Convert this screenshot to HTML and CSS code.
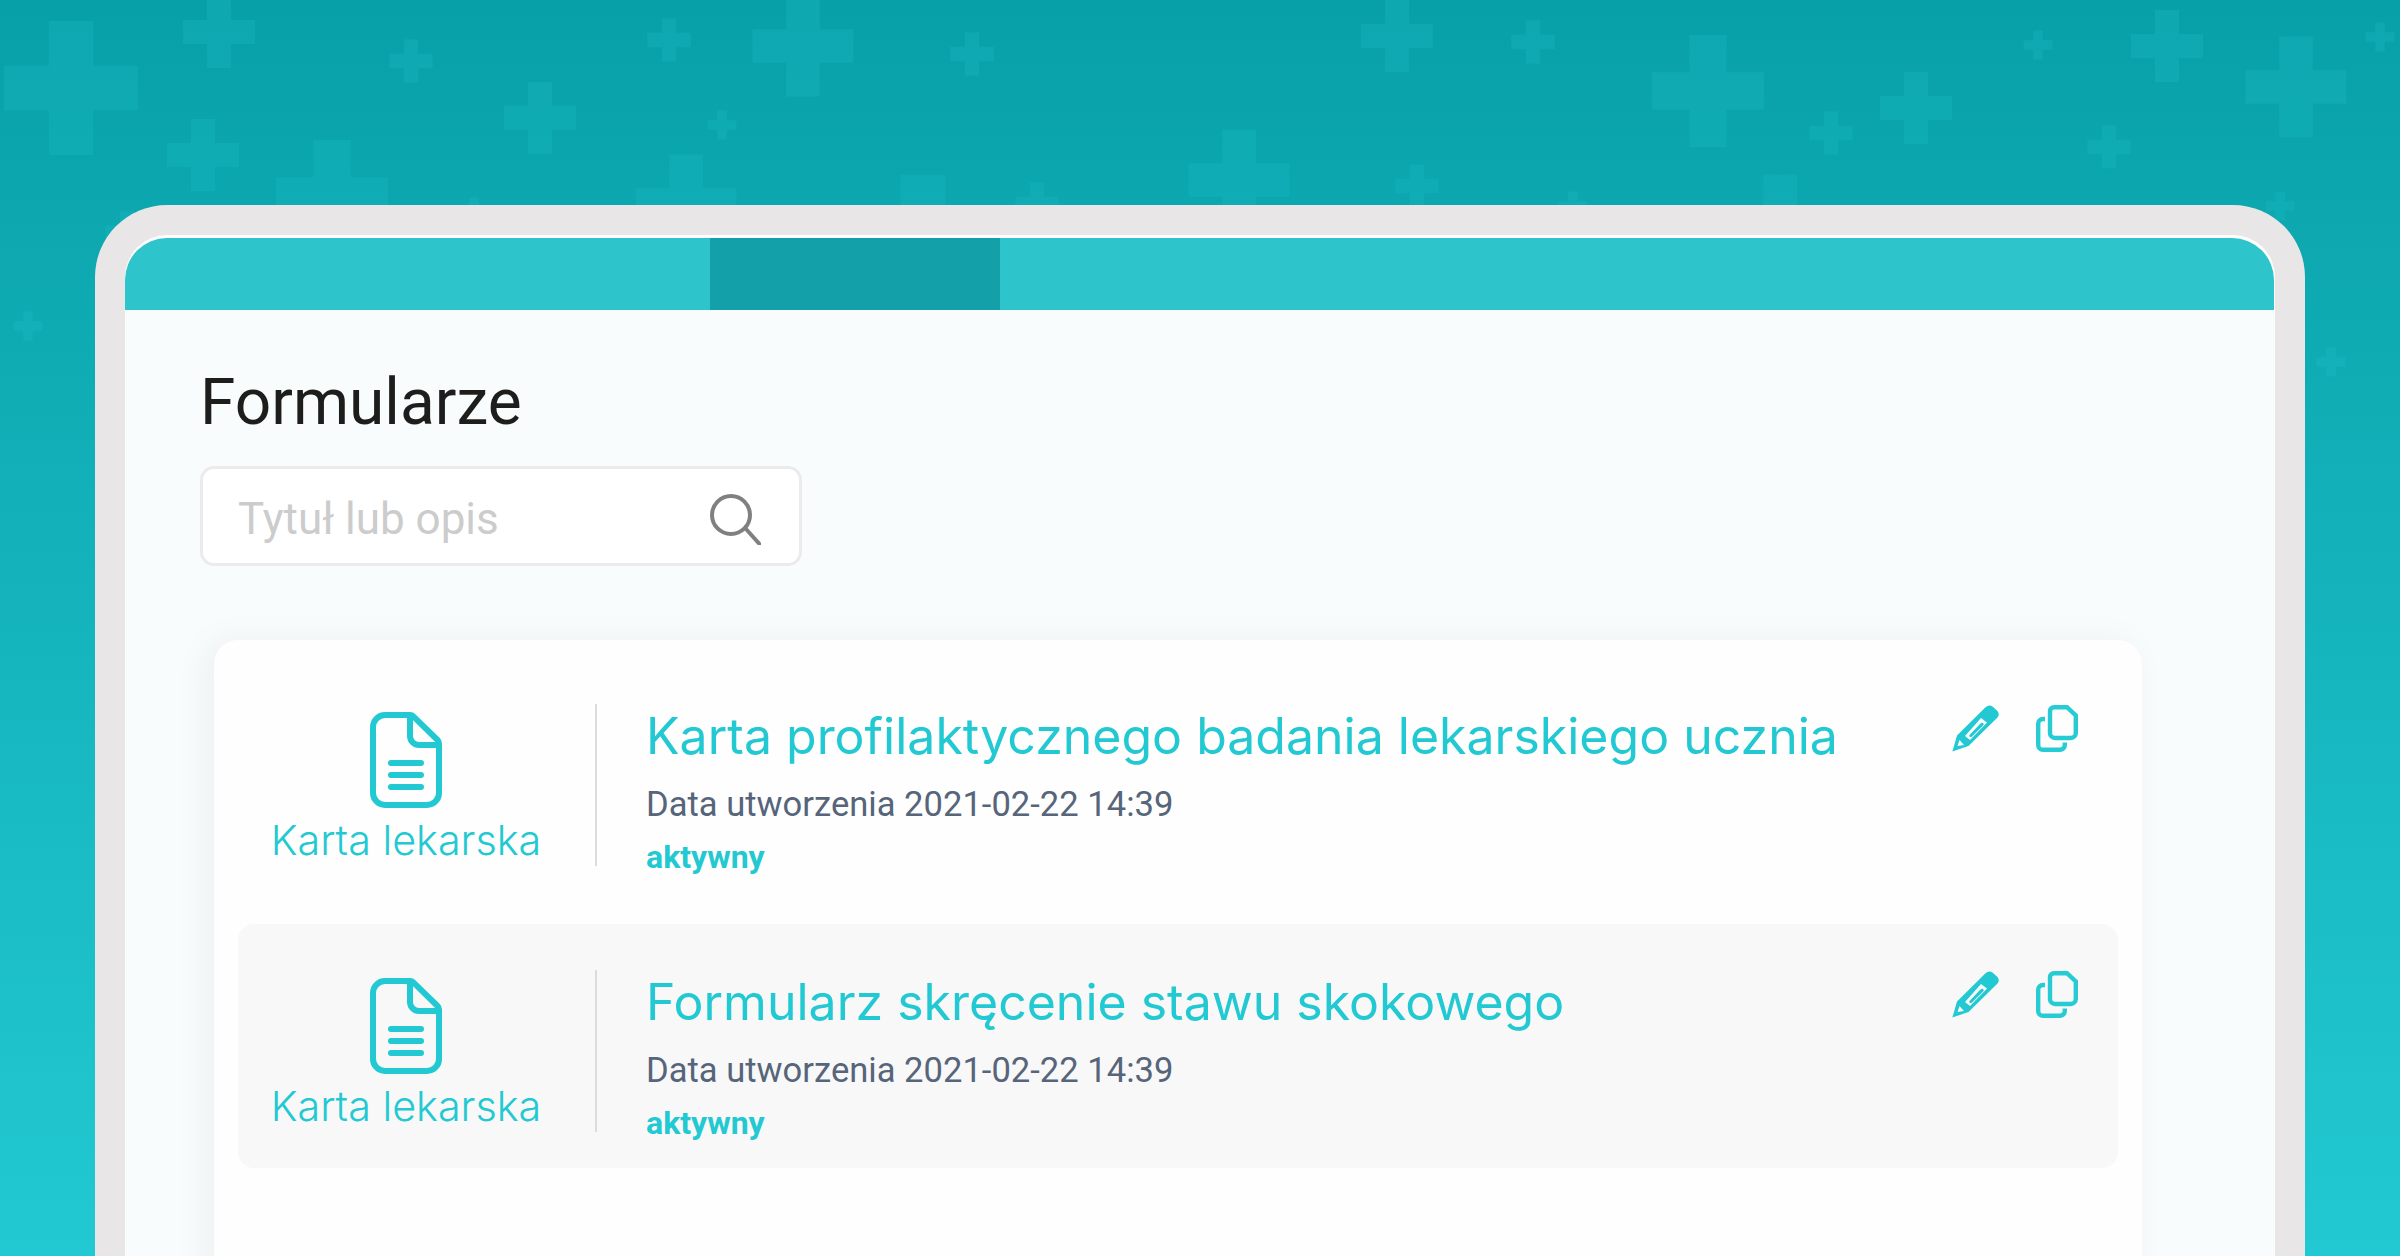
FILE: index.html
```html
<!DOCTYPE html>
<html lang="pl">
<head>
    <meta charset="UTF-8">
    <meta name="viewport" content="width=device-width, initial-scale=1.0">
    <title>Formularze</title>
    <link rel="stylesheet" href="styles.css">
</head>
<body>

    <!-- Background crosses -->
    <svg class="crosses" width="2400" height="1256" viewBox="0 0 2400 1256" aria-hidden="true">
        <defs>
            <path id="plus" d="M-1-3H1V-1H3V1H1V3H-1V1H-3V-1H-1Z"/>
        </defs>
        <use href="#plus" transform="translate(71 88) scale(22.3)"/>
        <use href="#plus" transform="translate(219 32) scale(12)"/>
        <use href="#plus" transform="translate(411 61) scale(7.2)"/>
        <use href="#plus" transform="translate(669 40) scale(7.2)"/>
        <use href="#plus" transform="translate(803 46) scale(16.8)"/>
        <use href="#plus" transform="translate(972 54) scale(7.2)"/>
        <use href="#plus" transform="translate(540 118) scale(12)"/>
        <use href="#plus" transform="translate(722 125) scale(4.8)"/>
        <use href="#plus" transform="translate(203 155) scale(12)"/>
        <use href="#plus" transform="translate(332 196) scale(18.7)"/>
        <use href="#plus" transform="translate(686 205) scale(16.8)"/>
        <use href="#plus" transform="translate(923 242) scale(22.3)"/>
        <use href="#plus" transform="translate(1037 204) scale(7.2)"/>
        <use href="#plus" transform="translate(474 212) scale(4.8)"/>
        <use href="#plus" transform="translate(1239 180) scale(16.8)"/>
        <use href="#plus" transform="translate(1397 36) scale(12)"/>
        <use href="#plus" transform="translate(1533 42) scale(7.2)"/>
        <use href="#plus" transform="translate(1708 91) scale(18.7)"/>
        <use href="#plus" transform="translate(1916 108) scale(12)"/>
        <use href="#plus" transform="translate(1831 133) scale(7.2)"/>
        <use href="#plus" transform="translate(2038 45) scale(4.8)"/>
        <use href="#plus" transform="translate(2167 46) scale(12)"/>
        <use href="#plus" transform="translate(2296 87) scale(16.8)"/>
        <use href="#plus" transform="translate(2380 37) scale(4.8)"/>
        <use href="#plus" transform="translate(2109 147) scale(7.2)"/>
        <use href="#plus" transform="translate(1417 186) scale(7.2)"/>
        <use href="#plus" transform="translate(1780 225) scale(16.8)"/>
        <use href="#plus" transform="translate(1573 206) scale(4.8)"/>
        <use href="#plus" transform="translate(2280 206) scale(4.8)"/>
        <use href="#plus" transform="translate(127 233) scale(7.2)"/>
        <use href="#plus" transform="translate(28 326) scale(4.8)"/>
        <use href="#plus" transform="translate(2331 362) scale(4.8)"/>
    </svg>

    <div class="frame">
        <div class="tabs">
            <div class="tab tab-first"></div>
            <div class="tab tab-active"></div>
            <div class="tab tab-rest"></div>
        </div>

        <main class="content">
            <h1 class="page-title">Formularze</h1>

            <div class="search-box">
                <span class="search-placeholder">Tytuł lub opis</span>
                <svg class="search-icon" width="51" height="51" viewBox="0 0 51 51">
                    <circle cx="21" cy="21" r="19" fill="none" stroke="#808080" stroke-width="4"/>
                    <path d="M36 35L49.5 50" fill="none" stroke="#808080" stroke-width="4" stroke-linecap="round"/>
                </svg>
            </div>

            <div class="form-list">
                <article class="form-row">
                    <div class="form-type">
                        <svg class="file-icon" width="72" height="96" viewBox="0 0 72 96">
                            <path d="M15 3H40a5 5 0 0 1 3.5 1.5L67.5 28a5 5 0 0 1 1.5 3.5V81a12 12 0 0 1-12 12H15a12 12 0 0 1-12-12V15A12 12 0 0 1 15 3Z"/>
                            <path d="M40 3V24a9 9 0 0 0 9 9H69"/>
                            <path d="M21 51H51M21 63H51M21 75H51" stroke-linecap="round"/>
                        </svg>
                        <span class="type-label">Karta lekarska</span>
                    </div>
                    <div class="form-info">
                        <h2 class="form-title">Karta profilaktycznego badania lekarskiego ucznia</h2>
                        <p class="form-date">Data utworzenia 2021-02-22 14:39</p>
                        <p class="form-status">aktywny</p>
                    </div>
                    <div class="form-actions">
                        <svg class="pencil-icon" width="47" height="47" viewBox="0 0 47 47">
                            <path fill-rule="evenodd" d="M.4 46.6 5 30.5 33.5 2.3Q37 -.7 40.5 1.5L45.5 6Q48 9.5 45.5 12.5L16.5 41ZM13 31 29 13 35 17.5 18 35ZM17.5 30 28.5 18.5Q30.5 17 31.5 18.5 32 19.7 31 20.5L20 31.5Q18.5 32.5 17.5 31.5 17 30.7 17.5 30ZM5.5 41 7.5 35 12 40Z"/>
                        </svg>
                        <svg class="copy-icon" width="42" height="47" viewBox="0 0 42 47">
                            <path d="M18 2.2H31L39.8 10.5V28a5 5 0 0 1-5 5H19a5 5 0 0 1-5-5V6.2a4 4 0 0 1 4-4Z"/>
                            <path d="M9 14H7a4.8 4.8 0 0 0-4.8 4.8V40A4.8 4.8 0 0 0 7 44.8H24A4.8 4.8 0 0 0 28.8 40V37.5"/>
                        </svg>
                    </div>
                </article>

                <article class="form-row">
                    <div class="form-type">
                        <svg class="file-icon" width="72" height="96" viewBox="0 0 72 96">
                            <path d="M15 3H40a5 5 0 0 1 3.5 1.5L67.5 28a5 5 0 0 1 1.5 3.5V81a12 12 0 0 1-12 12H15a12 12 0 0 1-12-12V15A12 12 0 0 1 15 3Z"/>
                            <path d="M40 3V24a9 9 0 0 0 9 9H69"/>
                            <path d="M21 51H51M21 63H51M21 75H51" stroke-linecap="round"/>
                        </svg>
                        <span class="type-label">Karta lekarska</span>
                    </div>
                    <div class="form-info">
                        <h2 class="form-title">Formularz skręcenie stawu skokowego</h2>
                        <p class="form-date">Data utworzenia 2021-02-22 14:39</p>
                        <p class="form-status">aktywny</p>
                    </div>
                    <div class="form-actions">
                        <svg class="pencil-icon" width="47" height="47" viewBox="0 0 47 47">
                            <path fill-rule="evenodd" d="M.4 46.6 5 30.5 33.5 2.3Q37 -.7 40.5 1.5L45.5 6Q48 9.5 45.5 12.5L16.5 41ZM13 31 29 13 35 17.5 18 35ZM17.5 30 28.5 18.5Q30.5 17 31.5 18.5 32 19.7 31 20.5L20 31.5Q18.5 32.5 17.5 31.5 17 30.7 17.5 30ZM5.5 41 7.5 35 12 40Z"/>
                        </svg>
                        <svg class="copy-icon" width="42" height="47" viewBox="0 0 42 47">
                            <path d="M18 2.2H31L39.8 10.5V28a5 5 0 0 1-5 5H19a5 5 0 0 1-5-5V6.2a4 4 0 0 1 4-4Z"/>
                            <path d="M9 14H7a4.8 4.8 0 0 0-4.8 4.8V40A4.8 4.8 0 0 0 7 44.8H24A4.8 4.8 0 0 0 28.8 40V37.5"/>
                        </svg>
                    </div>
                </article>
            </div>
        </main>
    </div>

</body>
</html>
```

FILE: styles.css
```css
body {
    margin: 0;
    height: 1256px;
    overflow: hidden;
    position: relative;
    box-sizing: border-box;
    padding: 205px 95px 0;
    font-family: Roboto, sans-serif;
    background: linear-gradient(180deg, #08a0a8 0%, #22c9d2 100%);
}

.crosses {
    position: absolute;
    top: 0;
    left: 0;
    fill: rgba(34, 201, 210, 0.2);
}

.frame {
    position: relative;
    box-sizing: border-box;
    height: 1051px;
    border: 30px solid #e8e6e7;
    border-bottom: 0;
    border-radius: 72px 72px 0 0;
    background-color: #fff;
    overflow: hidden;
}

.tabs {
    display: flex;
    height: 72px;
    margin-top: 3px;
    margin-right: 1px;
    border-radius: 42px 42px 0 0;
    overflow: hidden;
    background-color: #2ec4cc;
}

.tab-first {
    width: 585px;
}

.tab-active {
    width: 290px;
    background-color: #13a0a8;
}

.tab-rest {
    flex: 1;
}

.content {
    height: 100%;
    padding: 57px 106px 0 75px;
    background-color: #f9fcfd;
}

.page-title {
    margin: 0;
    font-size: 64px;
    font-weight: 400;
    line-height: 72px;
    color: #1d1d1b;
}

.search-box {
    display: flex;
    align-items: center;
    justify-content: space-between;
    box-sizing: border-box;
    width: 602px;
    height: 100px;
    margin-top: 27px;
    padding: 0 38px 0 35px;
    background-color: #fff;
    border: 3px solid #ebebee;
    border-radius: 14px;
}

.search-placeholder {
    margin-top: 5px;
    font-size: 44px;
    font-weight: 400;
    color: #cccccc;
}

.search-icon {
    margin-top: 6px;
}

.form-list {
    display: flex;
    flex-direction: column;
    gap: 22px;
    width: 1880px;
    height: 700px;
    margin: 74px 0 0 14px;
    padding: 18px 24px 0;
    background-color: #fefefe;
    border-radius: 24px;
    box-shadow: -8px 0 34px rgba(0, 0, 0, 0.05);
}

.form-row {
    display: flex;
    align-items: flex-start;
    height: 244px;
    box-sizing: border-box;
    padding-top: 46px;
    border-radius: 16px;
}

.form-row:nth-child(even) {
    background-color: #f8f8f8;
}

.form-type {
    display: flex;
    flex-direction: column;
    align-items: center;
    width: 336px;
    height: 154px;
    padding-top: 8px;
    padding-right: 21px;
    border-right: 2px solid #dcdcdc;
}

.file-icon {
    fill: none;
    stroke: #22c9d2;
    stroke-width: 6;
}

.type-label {
    margin-top: 9px;
    font-family: Inter, sans-serif;
    font-size: 41.3px;
    font-weight: 300;
    line-height: 46px;
    color: #22c9d2;
}

.form-info {
    flex: 1;
    padding-left: 49px;
}

.form-title {
    margin: 0;
    font-family: Inter, sans-serif;
    font-size: 50px;
    font-weight: 400;
    line-height: 64px;
    color: #22c9d2;
}

.form-date {
    margin: 16px 0 0;
    font-size: 34.6px;
    font-weight: 400;
    line-height: 40px;
    color: #56657a;
}

.form-status {
    margin: 15px 0 0;
    font-size: 32px;
    font-weight: 700;
    line-height: 36px;
    color: #22c9d2;
}

.form-actions {
    display: flex;
    align-items: flex-start;
    gap: 37px;
    padding-right: 40px;
    margin-top: 1px;
}

.pencil-icon {
    fill: #22c9d2;
}

.copy-icon {
    fill: none;
    stroke: #27cbd4;
    stroke-width: 4.4;
}
```
